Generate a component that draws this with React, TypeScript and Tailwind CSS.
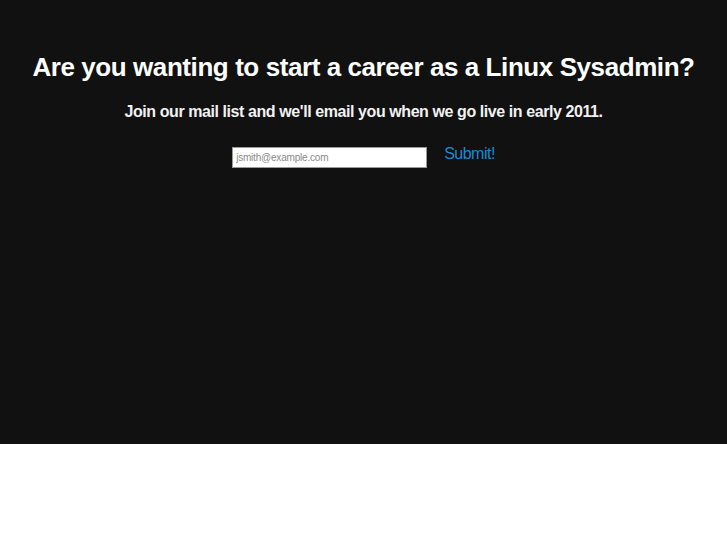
export default function App() {
  return (
    <div className="min-h-[545px] bg-white font-['Liberation_Sans',Arial,sans-serif]">
      <section className="h-[444px] bg-[#111111] pt-[52px] text-center text-white">
        <h1 className="text-[26px] font-bold leading-[30px] tracking-[-0.42px]">
          Are you wanting to start a career as a Linux Sysadmin?
        </h1>
        <p className="mt-[20px] text-[16px] font-bold leading-[20px] tracking-[-0.42px] text-[#f2f2f2]">
          Join our mail list and we'll email you when we go live in early 2011.
        </p>
        <form className="mt-[25px] flex items-start justify-center gap-[17px]">
          <input
            type="text"
            placeholder="jsmith@example.com"
            className="h-[21px] w-[195px] border border-[#9a9a9a] bg-white px-[3px] text-[10px] tracking-[-0.2px] text-[#333] placeholder-[#8a8a8a] outline-none"
          />
          <button type="button" className="-mt-[3px] text-[16px] leading-[20px] tracking-[-0.5px] text-[#1a8ad4]">
            Submit!
          </button>
        </form>
      </section>
    </div>
  );
}
